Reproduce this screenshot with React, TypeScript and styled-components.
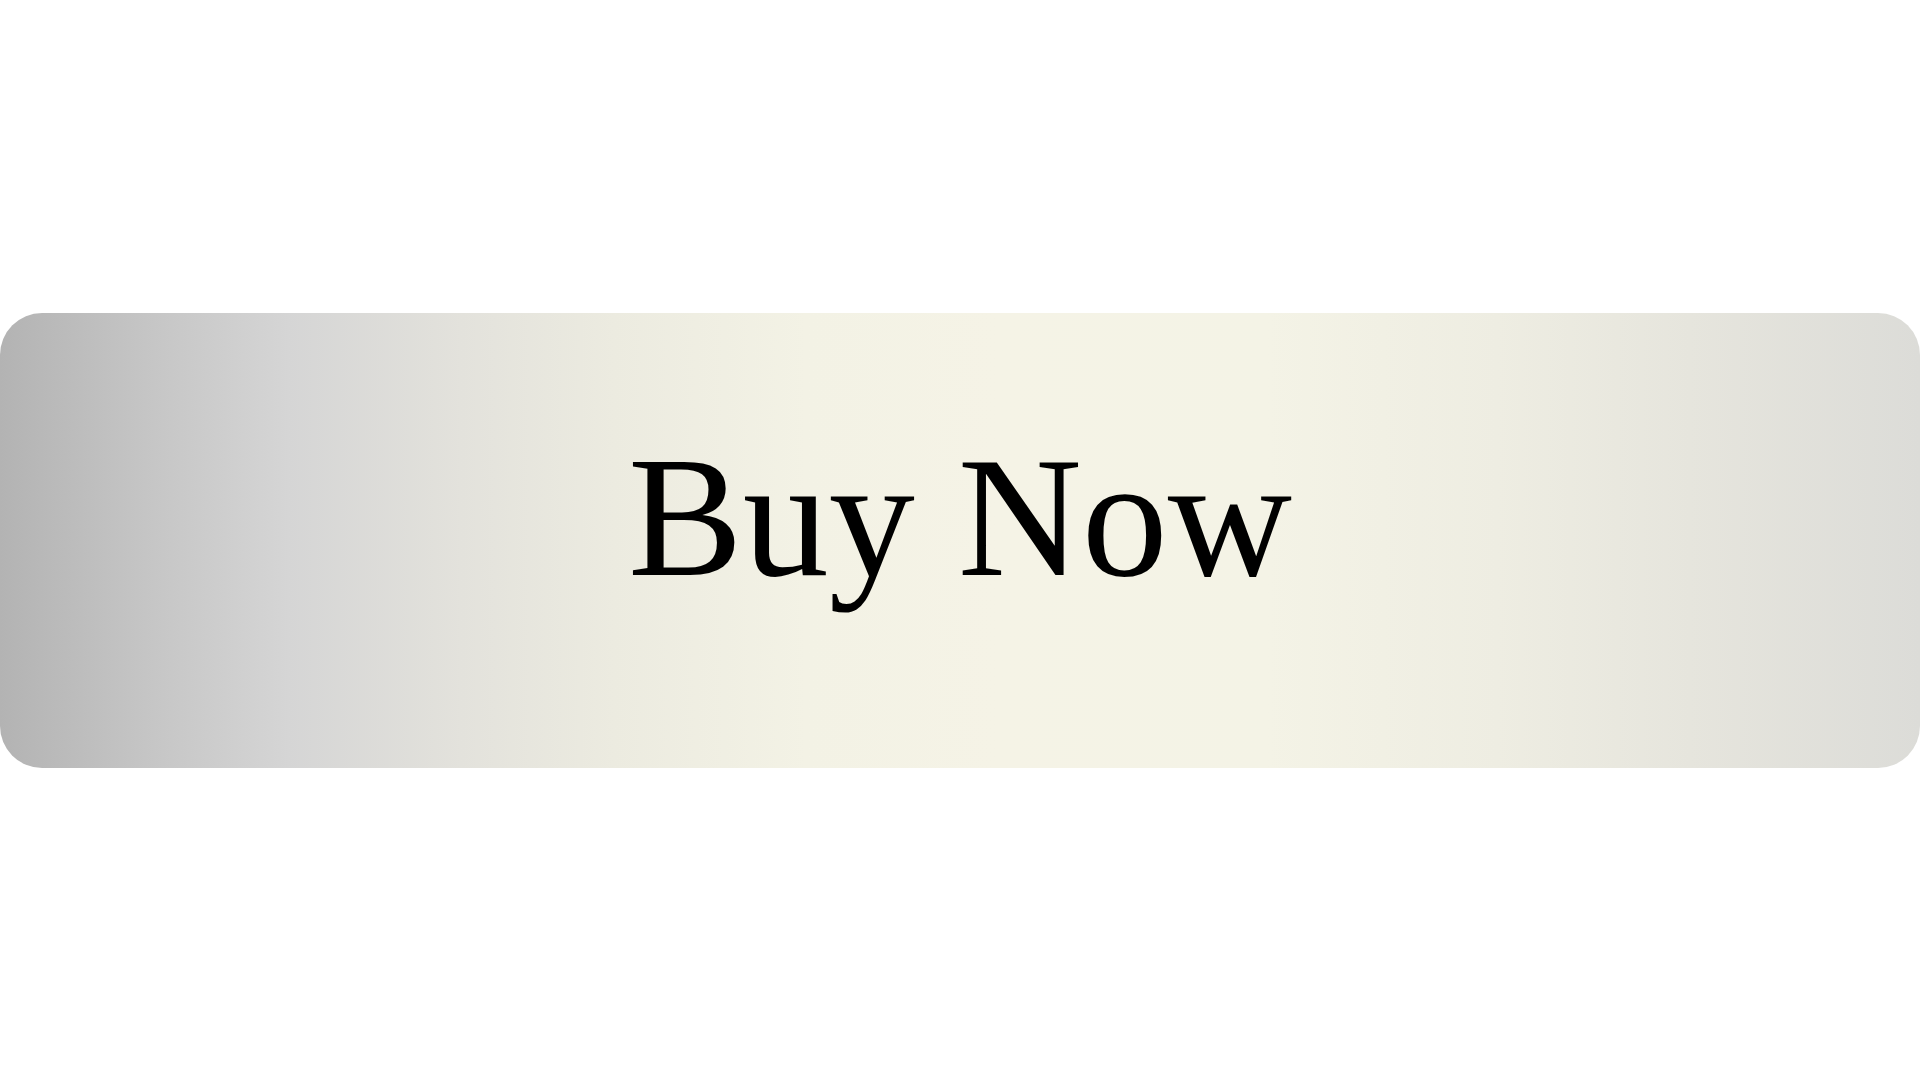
import React from "react";
import styled, { createGlobalStyle } from "styled-components";

const GlobalStyle = createGlobalStyle`
  html, body {
    margin: 0;
    padding: 0;
    background: #ffffff;
  }
  #root {
    min-height: 100vh;
  }
`;

const Page = styled.main`
  min-height: 100vh;
  display: flex;
  align-items: center;
  justify-content: center;
`;

/* Full-width pill button with a silver → cream → silver sheen */
const BuyButton = styled.button`
  width: 100%;
  height: 455px;
  border: none;
  border-radius: 42px;
  padding: 0 0 46px;
  margin: 0;
  cursor: pointer;
  display: flex;
  align-items: center;
  justify-content: center;
  background: linear-gradient(
    90deg,
    #b3b3b3 0%,
    #c6c6c6 8%,
    #d5d5d5 15%,
    #e3e2dc 24%,
    #ecebe0 32%,
    #f3f2e5 42%,
    #f5f3e6 52%,
    #f4f3e6 66%,
    #eeede2 78%,
    #e6e5dd 88%,
    #dcdcd8 100%
  );
`;

const Label = styled.span`
  font-family: "Liberation Serif", "Times New Roman", serif;
  font-size: 172px;
  font-weight: 400;
  line-height: 1;
  color: #000000;
`;

export default function App() {
  return (
    <>
      <GlobalStyle />
      <Page>
        <BuyButton type="button">
          <Label>Buy Now</Label>
        </BuyButton>
      </Page>
    </>
  );
}
